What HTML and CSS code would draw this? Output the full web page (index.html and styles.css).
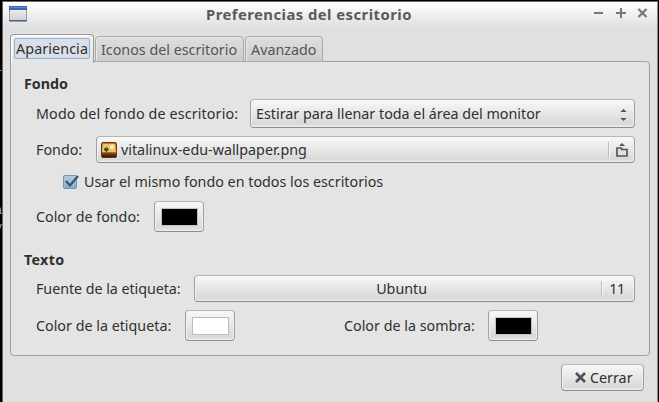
FILE: index.html
```html
<!DOCTYPE html>
<html lang="es">
<head>
<meta charset="utf-8">
<title>Preferencias del escritorio</title>
<link rel="stylesheet" href="styles.css">
</head>
<body>
<div class="terminal"><span class="t1">r</span><span class="t2">a</span><span class="t3">y</span></div>
<main class="window">
  <header class="titlebar">
    <svg class="app-icon" width="18" height="16" viewBox="0 0 18 16"><defs><linearGradient id="g" x2="0" y2="1"><stop stop-color="#f2f2f2"/><stop offset="1" stop-color="#cfcfcf"/></linearGradient></defs><path fill="url(#g)" stroke="#999" d="M.5.5h17v15H.5z"/><path fill="#3568ac" d="M0 0h18v4H0z"/><path fill="#5c8dca" d="M1 1h16v1H1z"/><path fill="#3568ac" d="M0 14h18v1H0z"/></svg>
    <h1>Preferencias del escritorio</h1>
    <svg class="controls" width="54" height="11" viewBox="0 0 54 11" fill="none" stroke="#777"><path stroke-width="2" d="M0 5h9"/><path stroke-width="2" d="M22 5h10M27 0v10"/><path stroke-width="2.300" d="M44.500 1l8 8M52.500 1l-8 8"/></svg>
  </header>
  <nav class="tabs">
    <div class="tab active"><span class="focus"><span class="s-tab1">Apariencia</span></span></div>
    <div class="tab tab2"><span class="s-tab2">Iconos del escritorio</span></div>
    <div class="tab tab3"><span class="s-tab3">Avanzado</span></div>
  </nav>
  <section class="panel">
    <h2 class="s-h1">Fondo</h2>
    <div class="row mode">
      <label class="s-mode">Modo del fondo de escritorio:</label>
      <div class="btn combo"><span class="s-combo">Estirar para llenar toda el área del monitor</span>
        <svg width="7" height="12" viewBox="0 0 7 12" fill="#555"><path d="M.3 3L3.500 0l3.200 3zM.3 9L3.500 12l3.200-3z"/></svg></div>
    </div>
    <div class="row file">
      <label class="s-fondo">Fondo:</label>
      <div class="btn chooser">
        <svg width="16" height="16" viewBox="0 0 16 16"><defs><linearGradient id="s" x2="0" y2="1"><stop stop-color="#b96c28"/><stop offset=".6" stop-color="#f1b865"/><stop offset=".7" stop-color="#884b12"/><stop offset="1" stop-color="#241100"/></linearGradient></defs><rect x=".5" y=".5" width="15" height="15" rx="1.5" fill="url(#s)" stroke="#66380f"/><path fill="#f3bd76" d="M2 2h12v8H2z"/><circle cx="11" cy="5" r="2.2" fill="#fff09a"/><path fill="#25651f" d="M3 7c1-2 4-2 4.500 0s-1 2-2 2S2.500 9 3 7"/><path stroke="#4d3207" d="M5.500 8v2.500"/></svg>
        <span class="s-png">vitalinux-edu-wallpaper.png</span>
        <i class="sep"></i>
        <svg class="folder" width="12" height="14" viewBox="0 0 12 14"><path fill="#555" d="M3 3l3-3 3 3z"/><path fill="none" stroke="#555" stroke-width="1.700" d="M1 5h4.500v1.500H11V13H1z"/></svg>
      </div>
    </div>
    <div class="row check">
      <svg width="16" height="16" viewBox="0 0 16 16"><defs><linearGradient id="c" x2="0" y2="1"><stop stop-color="#b5cde2"/><stop offset="1" stop-color="#86aed0"/></linearGradient></defs><rect x=".5" y="1.500" width="13" height="13" rx="1.500" fill="url(#c)" stroke="#6f94b3"/><path d="M3 7l4 4.500L15 2" fill="none" stroke="#415468" stroke-width="2.200"/></svg>
      <span class="s-check">Usar el mismo fondo en todos los escritorios</span>
    </div>
    <div class="row color">
      <label class="s-cfondo">Color de fondo:</label><div class="btn swatch"><i></i></div>
    </div>
    <h2 class="second s-h2">Texto</h2>
    <div class="row font">
      <label class="s-fuente">Fuente de la etiqueta:</label>
      <div class="btn fontbtn"><span class="name"><span class="s-ubuntu">Ubuntu</span></span><i class="sep"></i><span class="s-11">11</span></div>
    </div>
    <div class="row colors">
      <label class="s-cetq">Color de la etiqueta:</label><div class="btn swatch white"><i></i></div>
      <label class="shadow s-csom">Color de la sombra:</label><div class="btn swatch"><i></i></div>
    </div>
  </section>
  <footer>
    <div class="btn close"><svg width="11" height="11" viewBox="0 0 11 11" fill="none" stroke="#505050" stroke-width="2.600"><path d="M1 1l9 9M10 1l-9 9"/></svg><span class="s-cerrar">Cerrar</span></div>
  </footer>
</main>
</body>
</html>
```
FILE: styles.css
```css
* { box-sizing: border-box; }
body {
  margin: 0;
  width: 659px;
  height: 402px;
  overflow: hidden;
  background: #000;
  color: #303030;
  font: 14.3px/20px "Noto Sans", "Open Sans", sans-serif;
  white-space: nowrap;
}
h1, h2 { margin: 0; font-size: 14.3px; line-height: 20px; }
svg { flex: none; display: block; }
.terminal {
  position: absolute;
  left: 0;
  top: 0;
  width: 2px;
  height: 402px;
  overflow: hidden;
  color: #aaa;
  font: 12px/14px "Liberation Mono", monospace;
}
.terminal span { position: absolute; left: -5px; }
.t1 { top: 67px; }
.t2 { top: 204px; }
.t3 { top: 221px; }
.window {
  margin: 1px 2px 0;
  width: 656px;
  height: 401px;
  border: 1px solid #666;
  border-bottom: 0;
  border-right-color: #888;
  background: linear-gradient(#fff, #e0e0e0 25px);
}
.titlebar {
  display: flex;
  height: 32px;
  padding: 4px 9px 0 6px;
}
.titlebar h1 { margin: -2px 0 0 179px; color: #5a5a5a; font-size: 14.8px; letter-spacing: .47px; }
.controls { margin: 2px 0 0 auto; }
.tabs { display: flex; align-items: flex-end; height: 28px; padding-left: 7px; }
.tab {
  height: 26px;
  border: 1px solid #aaa;
  border-radius: 4px 4px 0 0;
  background: linear-gradient(#dedede, #cdcdcd);
  box-shadow: inset 1px 1px #e8e8e8;
  color: #555;
  padding: 3px 5px 0;
  margin-right: 1px;
}
.tab2 { width: 149px; }
.tab3 { width: 78px; }
.tab.active {
  position: relative;
  width: 84px;
  height: 29px;
  margin-bottom: -1px;
  padding: 3px;
  border-color: #999;
  border-bottom: 0;
  background: linear-gradient(#f4f4f4, #e4e4e4);
  box-shadow: inset 1px 1px #fff;
  color: #303030;
}
.focus {
  display: block;
  height: 21px;
  padding-left: 1px;
  border: 1px solid #8db2d3;
  border-radius: 2px;
  background: #d8dfe6;
  line-height: 19px;
}
.s-tab1 { letter-spacing: .1px; }
.panel {
  width: 640px;
  height: 295px;
  margin: -1px 0 0 7px;
  padding: 12px 14px 0 13px;
  border: 1px solid #a0a0a0;
  border-radius: 0 4px 4px 4px;
  background: #e4e4e4;
}
.panel h2.second { margin-top: 18px; letter-spacing: .3px; }
.row { display: flex; align-items: center; padding-left: 12px; }
.s-mode { letter-spacing: .13px; }
.s-fuente { letter-spacing: -.05px; }
.btn {
  display: flex;
  align-items: center;
  height: 27px;
  border: 1px solid #a8a8a8;
  border-color: #b4b4b4 #a0a0a0 #8c8c8c;
  border-radius: 4px;
  background: linear-gradient(#f8f8f8, #d9d9d9 88%, #e6e6e6);
  box-shadow: inset 1px 0 #f2f2f2, inset -1px -1px #eee;
}
.mode { height: 29px; margin-top: 5px; }
.combo { width: 385px; height: 29px; margin-left: auto; padding: 0 7px 0 5px; justify-content: space-between; }
.combo svg { margin-top: 2px; }
.file { height: 27px; margin-top: 8px; }
.chooser { width: 539px; margin-left: auto; padding: 0 6px 0 4px; }
.chooser > span { margin-left: 4px; }
.sep { width: 2px; height: 16px; margin-left: auto; background: linear-gradient(90deg, #bbb 50%, #f8f8f8 50%); }
.folder { margin-left: 6px; }
.check { height: 20px; margin-top: 9px; padding-left: 39px; }
.check span { margin-left: 5px; }
.color { height: 31px; margin-top: 9px; }
.swatch { width: 50px; height: 31px; justify-content: center; }
.swatch i { flex: none; width: 37px; height: 18px; border: 1px solid #c2c2c2; background: #000; }
.swatch.white i { background: #fff; border-color: #bbb; }
.color .swatch { margin-left: auto; margin-right: 431px; }
.font { height: 27px; margin-top: 5px; }
.fontbtn { width: 441px; margin-left: auto; padding-right: 9px; }
.name { flex: 1; text-align: center; padding-left: 7px; }
.fontbtn .sep { margin-right: 6px; }
.s-11 { letter-spacing: -.3px; }
.colors { height: 31px; margin-top: 8px; }
.colors label:first-child { width: 149px; }
.colors .shadow { width: 144px; margin-left: 109px; }
footer { display: flex; justify-content: flex-end; padding: 8px 13px 0; }
.close { width: 83px; padding-left: 13px; }
.close span { margin-left: 4px; }
```
